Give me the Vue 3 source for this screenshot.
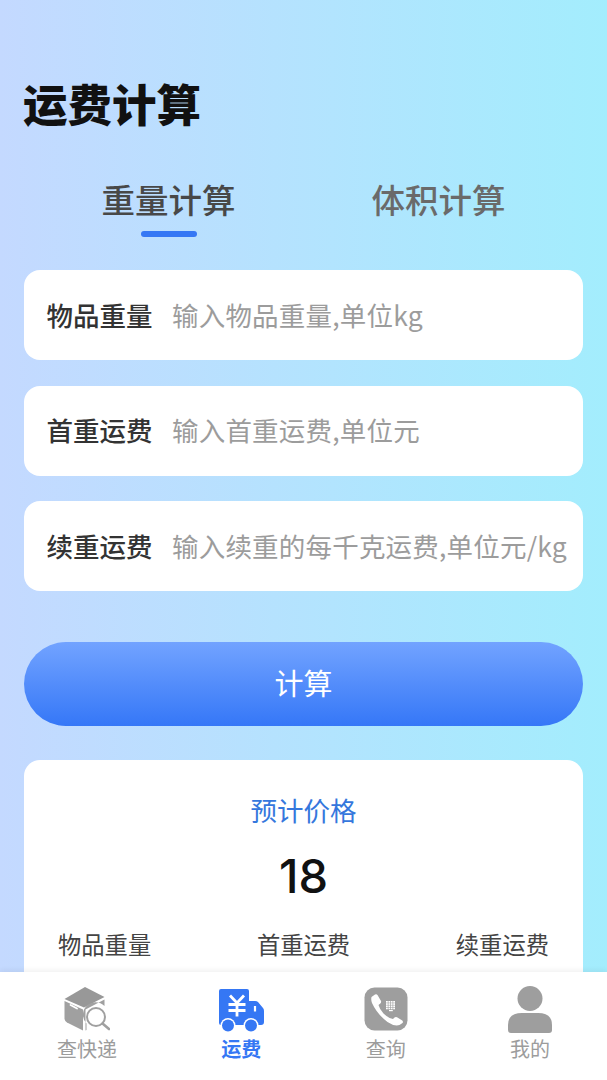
<script setup>
import { ref } from 'vue'

const activeTab = ref(0)
const tabs = ['重量计算', '体积计算']
const fields = [
  { label: '物品重量', hint: '输入物品重量,单位kg' },
  { label: '首重运费', hint: '输入首重运费,单位元' },
  { label: '续重运费', hint: '输入续重的每千克运费,单位元/kg' },
]
const summary = ['物品重量', '首重运费', '续重运费']
</script>

<template>
  <div class="page">
    <main class="content">
      <h1 class="title">运费计算</h1>

      <div class="tabs">
        <div
          v-for="(t, i) in tabs"
          :key="t"
          class="tab"
          :class="{ active: activeTab === i }"
          @click="activeTab = i"
        >
          {{ t }}
        </div>
      </div>

      <div class="fields">
        <div v-for="f in fields" :key="f.label" class="field">
          <span class="field-label">{{ f.label }}</span>
          <input class="field-input" :placeholder="f.hint" />
        </div>
      </div>

      <button class="calc-btn">计算</button>

      <section class="result">
        <div class="result-title">预计价格</div>
        <div class="result-price">18</div>
        <div class="result-row">
          <span v-for="s in summary" :key="s">{{ s }}</span>
        </div>
      </section>
    </main>

    <nav class="tabbar">
      <div class="nav-item">
        <svg class="nav-icon icon-box" width="46" height="44" viewBox="0 0 46 44">
          <path d="M21 0 40.500 10 20 20.500 0.500 12Z" fill="#989898" />
          <path d="M0.500 14 19 22.500V43.500L3 35.500Q1 34.500 0.500 32Z" fill="#a0a0a0" />
          <path d="M21.500 22.500 40.500 12.500V19A12 12 0 0 0 22.500 36.500V43L21.500 43.500Z" fill="#a0a0a0" />
          <path d="M6.500 18 13 21.500" stroke="#fff" stroke-width="1.800" stroke-linecap="round" fill="none" />
          <circle cx="32" cy="30" r="9" fill="none" stroke="#a0a0a0" stroke-width="2" />
          <path d="M38.500 36.500 45 42" stroke="#a0a0a0" stroke-width="2.600" stroke-linecap="round" />
        </svg>
        <span>查快递</span>
      </div>

      <div class="nav-item on">
        <svg class="nav-icon icon-truck" width="46" height="43" viewBox="0 0 46 43">
          <path d="M3 0H29Q31 0 31 2V12H37Q39 12 40 13L45 19Q46 20 46 22V33Q46 36 43 36H3Q1 36 1 34V2Q1 0 3 0Z" fill="#3577f4" />
          <circle cx="10" cy="36.500" r="7.500" fill="#fff" />
          <circle cx="33" cy="36.500" r="7.500" fill="#fff" />
          <circle cx="10" cy="36.500" r="6" fill="#3577f4" />
          <circle cx="33" cy="36.500" r="6" fill="#3577f4" />
          <path d="M12 6.500 19 14 26 6.500M10.500 15.500H27.500M10.500 21.500H27.500M19 14V27.500" stroke="#fff" stroke-width="2.800" fill="none" />
          <path d="M37 17V22.500" stroke="#fff" stroke-width="2.200" />
        </svg>
        <span>运费</span>
      </div>

      <div class="nav-item">
        <svg class="nav-icon icon-phone" width="44" height="44" viewBox="0 0 44 44">
          <rect x="0.500" y="0.500" width="43" height="43" rx="10" fill="#9e9e9e" />
          <path d="M7.500 10 11 7.500Q12.500 6.700 13.500 8L17 14Q17.500 15.500 16.300 16.500L14.500 18Q15.500 22 19.500 26.500Q24 31 29 32L30.500 30.500Q31.700 29.500 33 30.300L38.300 33.500Q39.500 34.800 38.500 36L35.500 38Q30 39.500 23.500 35Q13 27 8 16Q6.800 12.500 7.500 10Z" fill="#fff" />
          <g fill="#fff">
            <rect v-for="n in 16" :key="n" :x="22 + ((n - 1) % 4) * 2.400" :y="14 + Math.floor((n - 1) / 4) * 2.200" width="1.800" height="1.700" />
          </g>
          <rect x="25" y="23" width="3.800" height="1.200" fill="#fff" />
        </svg>
        <span>查询</span>
      </div>

      <div class="nav-item">
        <svg class="nav-icon icon-user" width="44" height="47" viewBox="0 0 44 47">
          <ellipse cx="22" cy="12.500" rx="12.500" ry="12.500" fill="#9e9e9e" />
          <path d="M14 27H30Q44 27 44 39V44Q44 47 41 47H3Q0 47 0 44V39Q0 27 14 27Z" fill="#9e9e9e" />
        </svg>
        <span>我的</span>
      </div>
    </nav>
  </div>
</template>

<style scoped>
.page {
  height: 100vh;
  display: flex;
  flex-direction: column;
  overflow: hidden;
  background: linear-gradient(90deg, #c4d9ff 0%, #a3edfd 100%);
  font-family: "Noto Sans CJK SC", "Noto Sans", sans-serif;
}

.content {
  flex: 1;
  min-height: 0;
  overflow: hidden;
  padding: 73px 24px 0;
}

.title {
  margin: 0 0 0 -1px;
  font-size: 44.500px;
  line-height: 60px;
  font-weight: 900;
  color: #111;
}

.tabs {
  margin-top: 37px;
  padding: 0 77.500px;
  display: flex;
  justify-content: space-between;
}

.tab {
  position: relative;
  font-size: 33.500px;
  line-height: 58px;
  font-weight: 500;
  color: #6a6a6a;
  cursor: pointer;
}

.tab.active {
  color: #484848;
}

.tab.active::after {
  content: "";
  position: absolute;
  left: 50%;
  bottom: -9px;
  width: 56px;
  height: 6px;
  margin-left: -28px;
  border-radius: 3px;
  background: #3577f4;
}

.fields {
  margin-top: 42px;
  display: flex;
  flex-direction: column;
  gap: 25.500px;
}

.field {
  height: 90px;
  padding: 0 12px 2px 22.500px;
  box-sizing: border-box;
  display: flex;
  align-items: center;
  gap: 19.500px;
  background: #fff;
  border-radius: 16px;
}

.field-label {
  flex: none;
  font-size: 26.500px;
  font-weight: 500;
  color: #333;
}

.field-input {
  flex: 1;
  min-width: 0;
  padding: 0;
  border: 0;
  outline: 0;
  background: none;
  font: inherit;
  font-size: 26.500px;
  letter-spacing: 0.200px;
  color: #333;
}

.field-input::placeholder {
  color: #9c9c9c;
  opacity: 1;
}

.calc-btn {
  display: block;
  width: 100%;
  height: 84px;
  padding: 0 0 5px;
  margin-top: 51px;
  border: 0;
  border-radius: 42px;
  background: linear-gradient(180deg, #72a3ff 0%, #3577f7 100%);
  font: inherit;
  font-size: 29px;
  color: #fff;
}

.result {
  margin-top: 34px;
  height: 260px;
  padding: 25px 34px 0;
  box-sizing: border-box;
  background: #fff;
  border-radius: 16px;
  text-align: center;
}

.result-title {
  font-size: 26.500px;
  line-height: 50px;
  color: #3577dd;
}

.result-price {
  margin-top: 11px;
  font-family: Inter, "Noto Sans", sans-serif;
  font-size: 47px;
  line-height: 60px;
  font-weight: 500;
  color: #111;
}

.result-row {
  margin-top: 20px;
  display: flex;
  justify-content: space-between;
  font-size: 23.300px;
  line-height: 36px;
  color: #444;
}

.tabbar {
  position: relative;
  flex: none;
  height: 108px;
  padding: 24px 57px 0;
  box-sizing: border-box;
  display: flex;
  justify-content: space-between;
  background: #fff;
  box-shadow: 0 -2px 5px rgba(0, 0, 0, 0.06);
}

.nav-item {
  height: 66px;
  display: flex;
  flex-direction: column;
  align-items: center;
  justify-content: flex-end;
  font-size: 20px;
  line-height: 26px;
  color: #9c9c9c;
}

.nav-item.on {
  color: #3577f4;
  font-weight: 700;
}

/* 图标比文字宽,不参与撑开列宽 */
.nav-icon {
  display: block;
  flex: none;
  margin: 0 -4px 5px;
}

.icon-truck {
  margin-bottom: 4px;
}

.icon-user {
  margin-bottom: 3px;
}
</style>
